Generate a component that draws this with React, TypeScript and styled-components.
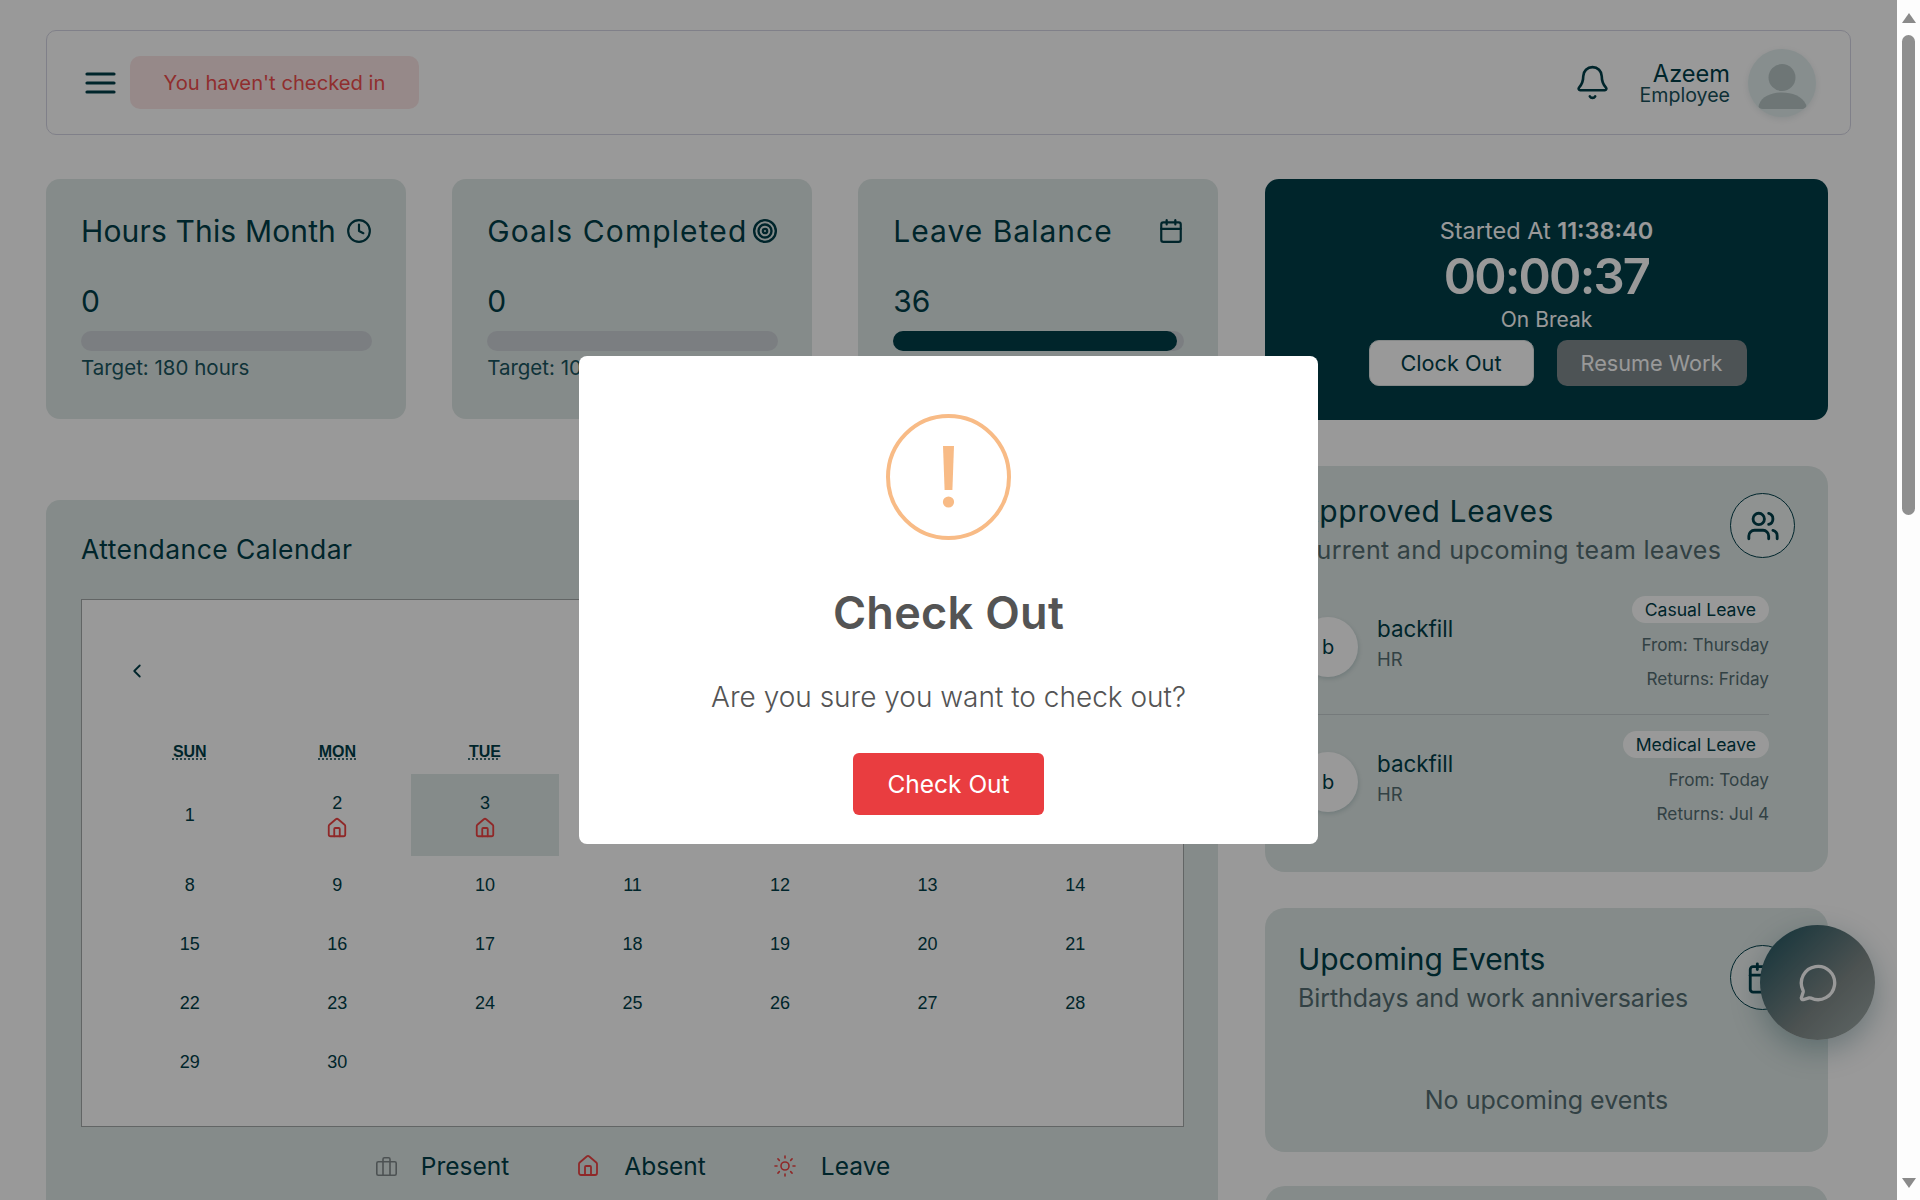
import styled, { createGlobalStyle } from 'styled-components'
import {
  Bell,
  Calendar,
  ChevronLeft,
  Clock,
  House,
  MessageCircle,
  Sun,
  Target,
  Users,
} from 'lucide-react'

const Global = createGlobalStyle`
  html, body {
    margin: 0;
    padding: 0;
    height: 1200px;
    overflow: hidden;
    background: #fff;
  }
  * {
    box-sizing: border-box;
  }
`

const Frame = styled.div`
  display: flex;
  width: 1920px;
  height: 1200px;
  font-family: Inter, 'Noto Sans', sans-serif;
  color: #003e49;
`
const Page = styled.div`
  position: relative;
  width: 1897px;
  height: 1200px;
  overflow: hidden;
  background: #fff;
  padding: 30px 46px 0;
`
const Header = styled.header`
  display: flex;
  align-items: center;
  justify-content: space-between;
  width: 1805px;
  height: 105px;
  padding: 0 34px 0 38px;
  border: 1px solid #d6d6e4;
  border-radius: 10px;
`
const HeaderLeft = styled.div`
  display: flex;
  align-items: center;
  gap: 14px;
`
const HeaderRight = styled.div`
  display: flex;
  align-items: center;
`
const Status = styled.div`
  display: flex;
  align-items: center;
  justify-content: center;
  width: 289px;
  height: 53px;
  border-radius: 10px;
  background: #fae5e5;
  color: #f04e4e;
  font-size: 20.2px;
`
const BellWrap = styled.div`
  display: flex;
  margin-right: 28px;
  color: #003e49;
`
const UserText = styled.div`
  display: flex;
  flex-direction: column;
  align-items: flex-end;
  margin-right: 18px;
  color: #003e49;
`
const UserName = styled.span`
  font-size: 23.6px;
  line-height: 25px;
`
const UserRole = styled.span`
  font-size: 19.6px;
  line-height: 18px;
  opacity: 0.9;
`
const Avatar = styled.div`
  display: flex;
  width: 68px;
  height: 68px;
  border-radius: 50%;
  overflow: hidden;
  background: #e1eded;
  box-shadow: 0 2px 6px rgba(0, 62, 73, 0.1);
`
const Main = styled.main`
  display: grid;
  grid-template-columns: 1172px 563px;
  gap: 47px;
  margin-top: 44px;
`
const Column = styled.div`
  display: flex;
  flex-direction: column;
`
const Stats = styled.div`
  display: grid;
  grid-template-columns: repeat(3, 1fr);
  gap: 46.5px;
`
const StatCard = styled.section`
  height: 240px;
  padding: 33px 34px 0 35px;
  border-radius: 14px;
  background: #dee8e6;
`
const StatTitle = styled.h3<{ $track: number }>`
  display: flex;
  align-items: center;
  justify-content: space-between;
  height: 38px;
  margin: 0;
  font-size: 30px;
  font-weight: 400;
  letter-spacing: ${({ $track }) => $track}px;
  white-space: nowrap;
`
const StatValue = styled.div`
  margin-top: 33px;
  font-size: 30px;
  line-height: 36px;
`
const Track = styled.div`
  height: 20px;
  margin-top: 12px;
  border-radius: 10px;
  background: #ced2d8;
`
const Fill = styled.div<{ $value: number }>`
  width: ${({ $value }) => $value}%;
  height: 100%;
  border-radius: 10px;
  background: #003e49;
`
const StatNote = styled.div`
  margin-top: 4px;
  font-size: 20.5px;
  line-height: 26px;
  color: #1a5560;
`
const CalendarCard = styled.section`
  margin-top: 81px;
  height: 760px;
  padding: 33px 35px 0;
  border-radius: 14px;
  background: #dee8e6;
`
const CalendarTitle = styled.h3`
  margin: 0 0 34px;
  height: 32px;
  font-size: 26.5px;
  line-height: 32px;
  font-weight: 400;
  letter-spacing: 0.45px;
`
const CalendarBox = styled.div`
  width: 1103px;
  height: 528px;
  padding: 34px;
  background: #fff;
  border: 1.5px solid #a3a9a9;
  font-family: 'Liberation Sans', Arial, sans-serif;
`
const CalendarNav = styled.div`
  display: flex;
  align-items: center;
  justify-content: space-between;
  height: 72px;
  margin-bottom: 24px;
  padding: 2px 10px 0;
`
const MonthLabel = styled.span`
  font-size: 20px;
`
const DayGrid = styled.div`
  display: grid;
  grid-template-columns: repeat(7, 1fr);
  grid-template-rows: 44px 82px repeat(4, 59px);
`
const Weekday = styled.div`
  display: flex;
  align-items: center;
  justify-content: center;
  font-size: 16px;
  font-weight: 700;
  abbr {
    text-decoration: underline dotted;
    text-underline-offset: 2px;
  }
`
const Day = styled.div<{ $active?: boolean; $lift?: boolean }>`
  display: flex;
  flex-direction: column;
  align-items: center;
  justify-content: center;
  padding-bottom: ${({ $lift }) => ($lift ? '2px' : '0')};
  font-size: 18px;
  line-height: 22px;
  background: ${({ $active }) => ($active ? '#dee8e6' : 'transparent')};
`
const AbsentIcon = styled(House)`
  margin-top: 3px;
  color: #ef4444;
`
const Legend = styled.div`
  display: flex;
  align-items: center;
  justify-content: center;
  gap: 67px;
  margin-top: 21px;
  padding-left: 2px;
`
const LegendItem = styled.div<{ $tone: string }>`
  display: flex;
  align-items: center;
  gap: 24px;
  font-size: 24.5px;
  line-height: 36px;
  svg {
    color: ${({ $tone }) => $tone};
  }
`
const TimerCard = styled.section`
  display: flex;
  flex-direction: column;
  align-items: center;
  height: 241px;
  padding-top: 37px;
  border-radius: 14px;
  background: #003e49;
  color: #fff;
`
const StartedAt = styled.div`
  font-size: 23.5px;
  line-height: 30px;
  b {
    font-weight: 600;
  }
`
const Elapsed = styled.div`
  margin-top: 1px;
  font-size: 49px;
  line-height: 60px;
  font-weight: 600;
  letter-spacing: -1.8px;
`
const BreakNote = styled.div`
  font-size: 21px;
  line-height: 26px;
`
const TimerActions = styled.div`
  display: flex;
  gap: 23px;
  margin-top: 7px;
  margin-left: 22px;
`
const TimerButton = styled.button<{ $muted?: boolean }>`
  width: ${({ $muted }) => ($muted ? '190px' : '165px')};
  height: 46px;
  border: ${({ $muted }) => ($muted ? 'none' : '1px solid #dfe5e5')};
  border-radius: 10px;
  background: ${({ $muted }) => ($muted ? '#818a8e' : '#fff')};
  color: ${({ $muted }) => ($muted ? '#fff' : '#003e49')};
  font-family: inherit;
  font-size: 21.7px;
`
const SideCard = styled.section<{ $top: number; $height: number; $pad: number }>`
  position: relative;
  flex: none;
  height: ${({ $height }) => $height}px;
  margin-top: ${({ $top }) => $top}px;
  padding: ${({ $pad }) => $pad}px 33px 0;
  border-radius: 20px;
  background: #dee8e6;
`
const SideHead = styled.div`
  display: flex;
  justify-content: space-between;
`
const SideTitle = styled.h3<{ $track: number }>`
  margin: 0 0 2px;
  font-size: 30px;
  line-height: 36px;
  font-weight: 400;
  letter-spacing: ${({ $track }) => $track}px;
`
const SideSub = styled.p<{ $track: number }>`
  margin: 0;
  font-size: 25px;
  line-height: 38px;
  letter-spacing: ${({ $track }) => $track}px;
  color: #546d72;
  white-space: nowrap;
`
const IconRing = styled.div<{ $drop: number }>`
  display: flex;
  align-items: center;
  justify-content: center;
  flex: none;
  width: 65px;
  height: 65px;
  margin-top: ${({ $drop }) => $drop}px;
  border: 1px solid #003e49;
  border-radius: 50%;
  background: #eef3f2;
`
const LeaveRows = styled.div`
  display: flex;
  flex-direction: column;
  width: 471px;
  margin-top: 28px;
`
const LeaveRow = styled.div<{ $last?: boolean }>`
  display: flex;
  align-items: center;
  justify-content: space-between;
  padding-bottom: ${({ $last }) => ($last ? '0' : '18px')};
  margin-bottom: ${({ $last }) => ($last ? '0' : '17px')};
  border-bottom: ${({ $last }) => ($last ? 'none' : '1px solid #c4cccd')};
`
const LeavePerson = styled.div`
  display: flex;
  align-items: center;
  gap: 19px;
`
const PersonText = styled.div`
  padding-bottom: 6px;
`
const Initial = styled.div`
  display: flex;
  align-items: center;
  justify-content: center;
  width: 60px;
  height: 60px;
  border-radius: 50%;
  background: #fff;
  font-size: 20px;
  box-shadow: 1px 2px 4px rgba(0, 62, 73, 0.15);
`
const PersonName = styled.div`
  font-size: 22.4px;
  line-height: 31px;
`
const PersonDept = styled.div`
  font-size: 18.5px;
  line-height: 30px;
  color: #546d72;
`
const LeaveDates = styled.div`
  display: flex;
  flex-direction: column;
  align-items: flex-end;
`
const LeaveType = styled.span`
  padding: 0 13px;
  height: 27px;
  margin-top: -1px;
  margin-bottom: 5px;
  border-radius: 14px;
  background: #fff;
  font-size: 17.6px;
  line-height: 27px;
`
const LeaveDate = styled.span`
  font-size: 17.2px;
  line-height: 34px;
  color: #546d72;
`
const EmptyNote = styled.div`
  margin-top: 66px;
  text-align: center;
  font-size: 25px;
  line-height: 34px;
  color: #546d72;
`
const ChatButton = styled.button`
  position: absolute;
  left: 1760px;
  top: 925px;
  display: flex;
  align-items: center;
  justify-content: center;
  width: 115px;
  height: 115px;
  border: none;
  border-radius: 50%;
  background: linear-gradient(135deg, #2c5c66 10%, #7f8988 60%, #a1adab 100%);
  color: #fff;
  box-shadow: 0 10px 30px rgba(0, 62, 73, 0.3);
`
const Overlay = styled.div`
  position: absolute;
  inset: 0;
  display: flex;
  align-items: center;
  justify-content: center;
  background: rgba(0, 0, 0, 0.4);
`
const Modal = styled.div`
  display: flex;
  flex-direction: column;
  align-items: center;
  width: 739px;
  height: 488px;
  padding-top: 58px;
  border-radius: 8px;
  background: #fff;
  color: #545454;
`
const ModalTitle = styled.h2`
  margin: 46px 0 0;
  font-size: 45px;
  line-height: 54px;
  font-weight: 600;
  letter-spacing: 0.3px;
`
const ModalText = styled.p`
  margin: 39px 0 0;
  font-size: 28px;
  line-height: 36px;
  font-weight: 300;
`
const ModalButton = styled.button`
  width: 191px;
  height: 62px;
  margin-top: 38px;
  border: none;
  border-radius: 6px;
  background: #e93d40;
  color: #fff;
  font-family: inherit;
  font-size: 24.5px;
`
const Scrollbar = styled.div`
  display: flex;
  flex-direction: column;
  align-items: center;
  justify-content: space-between;
  width: 23px;
  height: 1200px;
  padding: 13px 0 12px;
  background: #fdfdfd;
`
const ScrollTop = styled.div`
  display: flex;
  flex-direction: column;
  align-items: center;
  gap: 12px;
`
const Arrow = styled.div<{ $down?: boolean }>`
  width: 0;
  height: 0;
  border-left: 7px solid transparent;
  border-right: 7px solid transparent;
  border-bottom: ${({ $down }) => ($down ? 'none' : '10px solid #8a8a8a')};
  border-top: ${({ $down }) => ($down ? '10px solid #8a8a8a' : 'none')};
`
const Thumb = styled.div`
  width: 13px;
  height: 480px;
  border-radius: 7px;
  background: #8f8f8f;
`

const weekdays = [
  ['Sunday', 'SUN'],
  ['Monday', 'MON'],
  ['Tuesday', 'TUE'],
  ['Wednesday', 'WED'],
  ['Thursday', 'THU'],
  ['Friday', 'FRI'],
  ['Saturday', 'SAT'],
]
const absentDays = [2, 3]
const days = Array.from({ length: 30 }, (_, i) => i + 1)

const leaves = [
  { type: 'Casual Leave', from: 'From: Thursday', back: 'Returns: Friday' },
  { type: 'Medical Leave', from: 'From: Today', back: 'Returns: Jul 4' },
]

const MenuIcon = () => (
  <svg width="31" height="24" viewBox="0 0 31 24" stroke="currentColor" strokeWidth="3.2" strokeLinecap="round">
    <path d="M2 3h27M2 12h27M2 21h27" />
  </svg>
)

const PersonIcon = () => (
  <svg width="68" height="68" viewBox="0 0 68 68">
    <circle cx="34" cy="28.5" r="13.5" fill="#b7c5c5" />
    <path
      d="M11 55.5C14 47 24 43.5 34 43.5S54 47 58 55.5Q59.5 60 54 60H15Q9.5 60 11 55.5Z"
      fill="#b7c5c5"
    />
  </svg>
)

const CaseIcon = () => (
  <svg width="21" height="19" viewBox="0 0 21 19" fill="none" stroke="currentColor" strokeWidth="1.6" strokeLinejoin="round">
    <rect x="0.8" y="4.8" width="19.4" height="13.4" rx="1.5" />
    <path d="M7 18V2.2Q7 .8 8.4 .8h4.2Q14 .8 14 2.2V18" />
  </svg>
)

const WarningIcon = () => (
  <svg width="125" height="126" viewBox="0 0 125 126">
    <ellipse cx="62.5" cy="63" rx="60.5" ry="61" fill="none" stroke="#f8bb86" strokeWidth="4" />
    <path d="M57 32h11l-1.6 44h-7.8z" fill="#f8bb86" />
    <circle cx="62.5" cy="88" r="5.6" fill="#f8bb86" />
  </svg>
)

export default function App() {
  return (
    <Frame>
      <Global />
      <Page>
        <Header>
          <HeaderLeft>
            <MenuIcon />
            <Status>You haven't checked in</Status>
          </HeaderLeft>
          <HeaderRight>
            <BellWrap>
              <Bell size={37} strokeWidth={1.7} />
            </BellWrap>
            <UserText>
              <UserName>Azeem</UserName>
              <UserRole>Employee</UserRole>
            </UserText>
            <Avatar>
              <PersonIcon />
            </Avatar>
          </HeaderRight>
        </Header>
        <Main>
          <Column>
            <Stats>
              <StatCard>
                <StatTitle $track={0.15}>
                  Hours This Month <Clock size={26} strokeWidth={2} />
                </StatTitle>
                <StatValue>0</StatValue>
                <Track />
                <StatNote>Target: 180 hours</StatNote>
              </StatCard>
              <StatCard>
                <StatTitle $track={1.1}>
                  Goals Completed <Target size={26} strokeWidth={2.2} />
                </StatTitle>
                <StatValue>0</StatValue>
                <Track />
                <StatNote>Target: 10 goals</StatNote>
              </StatCard>
              <StatCard>
                <StatTitle $track={1}>
                  Leave Balance <Calendar size={26} strokeWidth={2} />
                </StatTitle>
                <StatValue>36</StatValue>
                <Track>
                  <Fill $value={97.5} />
                </Track>
                <StatNote>Target: 37 days</StatNote>
              </StatCard>
            </Stats>
            <CalendarCard>
              <CalendarTitle>Attendance Calendar</CalendarTitle>
              <CalendarBox>
                <CalendarNav>
                  <ChevronLeft size={22} />
                  <MonthLabel>June 2025</MonthLabel>
                  <span />
                </CalendarNav>
                <DayGrid>
                  {weekdays.map(([full, short]) => (
                    <Weekday key={short}>
                      <abbr title={full}>{short}</abbr>
                    </Weekday>
                  ))}
                  {days.map((d) => (
                    <Day key={d} $active={d === 3} $lift={d > 7}>
                      {d}
                      {absentDays.includes(d) && <AbsentIcon size={22} strokeWidth={2} />}
                    </Day>
                  ))}
                </DayGrid>
              </CalendarBox>
              <Legend>
                <LegendItem $tone="#80898b">
                  <CaseIcon />
                  Present
                </LegendItem>
                <LegendItem $tone="#ef4444">
                  <House size={24} strokeWidth={1.8} />
                  Absent
                </LegendItem>
                <LegendItem $tone="#ef4444">
                  <Sun size={24} strokeWidth={1.6} />
                  Leave
                </LegendItem>
              </Legend>
            </CalendarCard>
          </Column>
          <Column>
            <TimerCard>
              <StartedAt>
                Started At <b>11:38:40</b>
              </StartedAt>
              <Elapsed>00:00:37</Elapsed>
              <BreakNote>On Break</BreakNote>
              <TimerActions>
                <TimerButton>Clock Out</TimerButton>
                <TimerButton $muted>Resume Work</TimerButton>
              </TimerActions>
            </TimerCard>
            <SideCard $top={46} $height={406} $pad={27}>
              <SideHead>
                <div>
                  <SideTitle $track={0.6}>Approved Leaves</SideTitle>
                  <SideSub $track={0.3}>Current and upcoming team leaves</SideSub>
                </div>
                <IconRing $drop={0}>
                  <Users size={34} strokeWidth={2} />
                </IconRing>
              </SideHead>
              <LeaveRows>
                {leaves.map((l, i) => (
                  <LeaveRow key={l.type} $last={i === leaves.length - 1}>
                    <LeavePerson>
                      <Initial>b</Initial>
                      <PersonText>
                        <PersonName>backfill</PersonName>
                        <PersonDept>HR</PersonDept>
                      </PersonText>
                    </LeavePerson>
                    <LeaveDates>
                      <LeaveType>{l.type}</LeaveType>
                      <LeaveDate>{l.from}</LeaveDate>
                      <LeaveDate>{l.back}</LeaveDate>
                    </LeaveDates>
                  </LeaveRow>
                ))}
              </LeaveRows>
            </SideCard>
            <SideCard $top={36} $height={244} $pad={33}>
              <SideHead>
                <div>
                  <SideTitle $track={-0.1}>Upcoming Events</SideTitle>
                  <SideSub $track={-0.1}>Birthdays and work anniversaries</SideSub>
                </div>
                <IconRing $drop={4}>
                  <Calendar size={34} strokeWidth={2} />
                </IconRing>
              </SideHead>
              <EmptyNote>No upcoming events</EmptyNote>
            </SideCard>
            <SideCard $top={34} $height={200} $pad={33} />
          </Column>
        </Main>
        <ChatButton>
          <MessageCircle size={40} strokeWidth={2} />
        </ChatButton>
        <Overlay>
          <Modal>
            <WarningIcon />
            <ModalTitle>Check Out</ModalTitle>
            <ModalText>Are you sure you want to check out?</ModalText>
            <ModalButton>Check Out</ModalButton>
          </Modal>
        </Overlay>
      </Page>
      <Scrollbar>
        <ScrollTop>
          <Arrow />
          <Thumb />
        </ScrollTop>
        <Arrow $down />
      </Scrollbar>
    </Frame>
  )
}
